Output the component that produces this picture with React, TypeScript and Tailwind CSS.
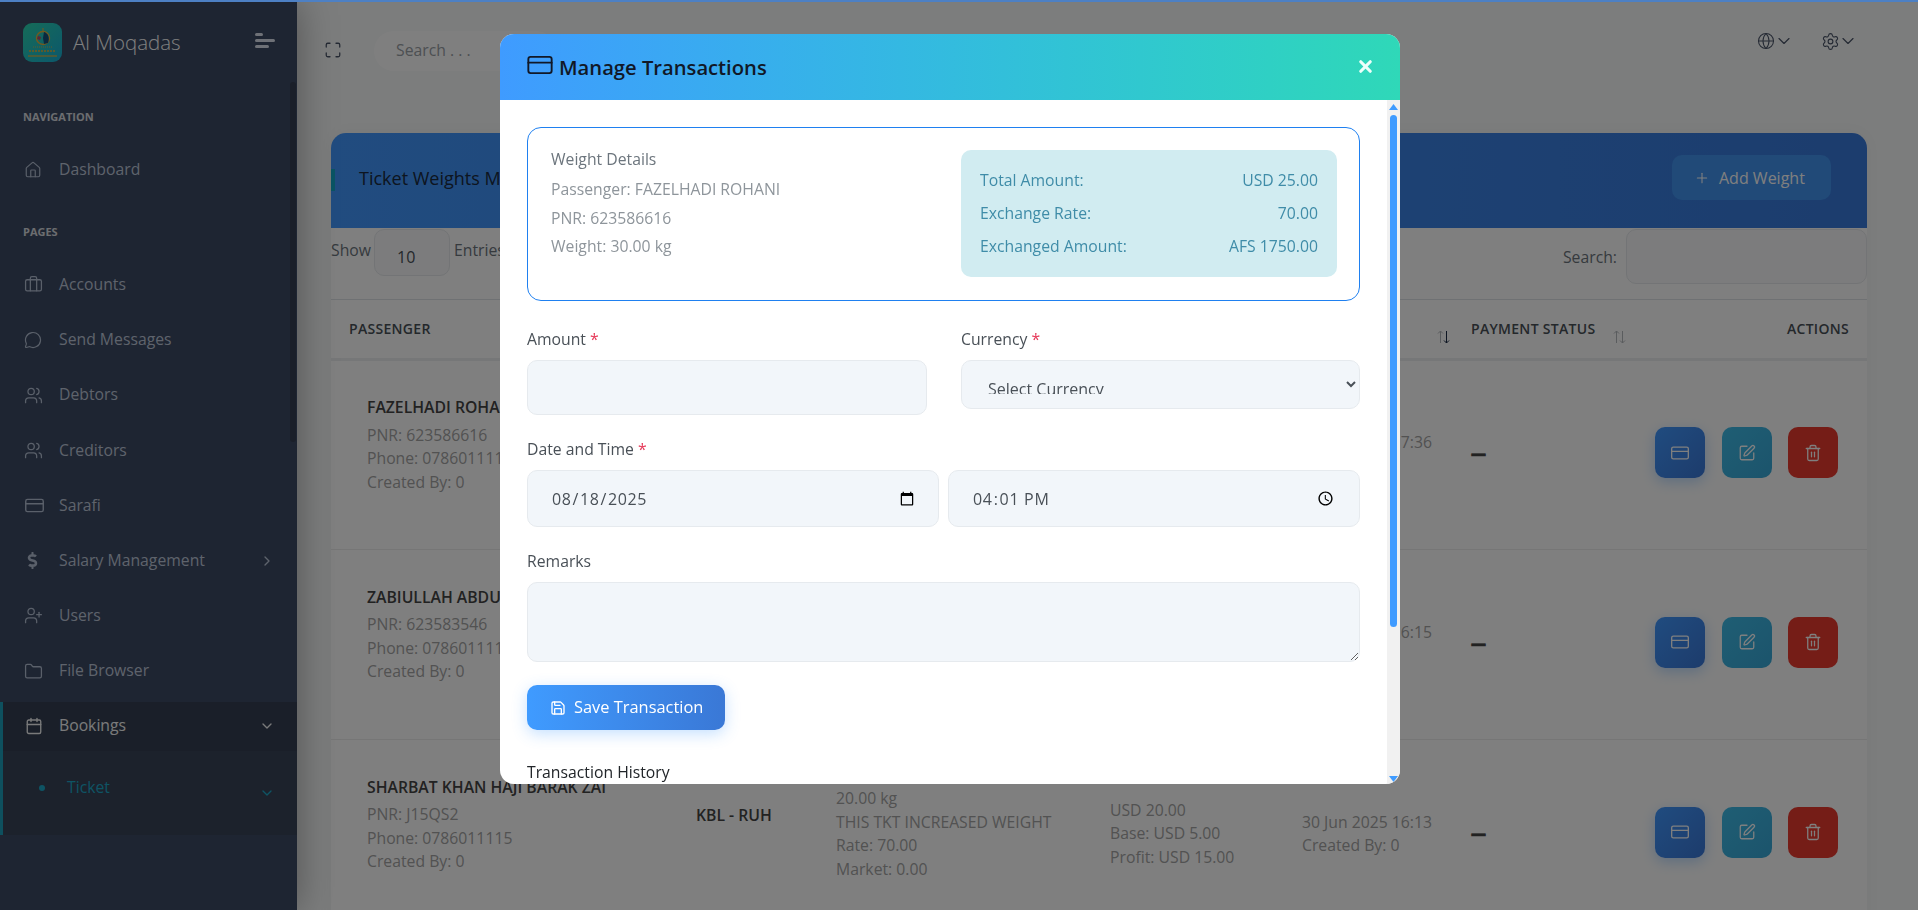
import React from 'react';
import {
  Briefcase,
  Calendar,
  ChevronDown,
  ChevronRight,
  CreditCard,
  Folder,
  Globe,
  House,
  Maximize,
  MessageCircle,
  Plus,
  Save,
  Settings,
  SquarePen,
  Trash2,
  UserPlus,
  Users,
  X,
} from 'lucide-react';
import { FaDollarSign } from 'react-icons/fa';

const rows = [
  {
    name: 'FAZELHADI ROHANI',
    pnr: '623586616',
    route: 'KBL - RUH',
    weight: '30.00 kg',
    note: 'THIS TKT INCREASED WEIGHT',
    amount: 'USD 25.00',
    base: 'USD 5.00',
    profit: 'USD 20.00',
    date: '30 Jun 2025 17:36',
  },
  {
    name: 'ZABIULLAH ABDUL',
    pnr: '623583546',
    route: 'KBL - RUH',
    weight: '20.00 kg',
    note: 'THIS TKT INCREASED WEIGHT',
    amount: 'USD 20.00',
    base: 'USD 5.00',
    profit: 'USD 15.00',
    date: '30 Jun 2025 16:15',
  },
  {
    name: 'SHARBAT KHAN HAJI BARAK ZAI',
    pnr: 'J15QS2',
    route: 'KBL - RUH',
    weight: '20.00 kg',
    note: 'THIS TKT INCREASED WEIGHT',
    amount: 'USD 20.00',
    base: 'USD 5.00',
    profit: 'USD 15.00',
    date: '30 Jun 2025 16:13',
  },
];

const NavItem: React.FC<{ icon: React.ReactNode; label: string; arrow?: boolean }> = ({ icon, label, arrow }) => (
  <div className="flex h-[55.2px] items-center pl-[24px] pr-[22px] pt-[2px] text-[#bcc6d8]">
    <span className="flex w-[35px] shrink-0 items-center text-[#b4c0d4]">{icon}</span>
    <span className="flex-1 text-[15.75px]">{label}</span>
    {arrow && <ChevronRight size={16} />}
  </div>
);

const NavLabel: React.FC<{ label: string }> = ({ label }) => (
  <div className="flex h-[60px] items-center pl-[23px] pt-[13px] text-[11px] font-bold text-[#ffffff] opacity-80">{label}</div>
);

const Logo = () => (
  <svg width="39" height="39" viewBox="0 0 39 39" className="shrink-0">
    <defs>
      <linearGradient id="logo-bg" x1="0" y1="0" x2="1" y2="1">
        <stop offset="0" stopColor="#2cd8b0" />
        <stop offset="1" stopColor="#18b0d8" />
      </linearGradient>
    </defs>
    <rect width="39" height="39" rx="9" fill="url(#logo-bg)" />
    <circle cx="20" cy="15" r="6.5" fill="none" stroke="#e8b23a" strokeWidth="1.4" />
    <path d="M21 9c4 1 6 6 4 11l-4 1-1-6z" fill="#14527e" />
    <path d="M15 13l3 1-1 3-3-1z" fill="#c04a6a" />
    <path d="M20 8V5" stroke="#e8b23a" strokeWidth="1" />
    <path d="M6 28h27" stroke="#e8b23a" strokeWidth="1.6" strokeDasharray="2 1" />
    <path d="M5 33h29" stroke="#e8b23a" strokeWidth="1.2" />
    <path d="M10 24h19" stroke="#e8b23a" strokeWidth=".8" strokeDasharray="1 1" />
  </svg>
);

const Sidebar = () => (
  <aside className="relative z-10 flex w-[297px] shrink-0 flex-col bg-[#3c4a64] shadow-[0_0_36px_rgba(0,0,0,0.35)]">
    <div className="flex h-[79px] items-center pl-[23px] pr-[22px] pt-[1px]">
      <Logo />
      <span className="ml-[11px] flex-1 text-[20.5px] font-light text-[#ffffff]">Al Moqadas</span>
      <div className="mt-[-4px] flex w-[20px] flex-col gap-[3px]">
        <div className="h-[3px] w-[8px] rounded-full bg-[#dde3ee]" />
        <div className="h-[3px] w-[20px] rounded-full bg-[#dde3ee]" />
        <div className="h-[3px] w-[14px] rounded-full bg-[#dde3ee]" />
      </div>
    </div>
    <div className="absolute right-[1px] top-[80px] h-[360px] w-[6px] rounded-full bg-[#343f52]" />
    <NavLabel label="NAVIGATION" />
    <NavItem icon={<House size={18} strokeWidth={1.6} />} label="Dashboard" />
    <NavLabel label="PAGES" />
    <NavItem icon={<Briefcase size={19} strokeWidth={1.6} />} label="Accounts" />
    <NavItem icon={<MessageCircle size={18} strokeWidth={1.6} />} label="Send Messages" />
    <NavItem icon={<Users size={19} strokeWidth={1.6} />} label="Debtors" />
    <NavItem icon={<Users size={19} strokeWidth={1.6} />} label="Creditors" />
    <NavItem icon={<CreditCard size={21} strokeWidth={1.6} />} label="Sarafi" />
    <NavItem icon={<FaDollarSign size={17} />} label="Salary Management" arrow />
    <NavItem icon={<UserPlus size={19} strokeWidth={1.6} />} label="Users" />
    <NavItem icon={<Folder size={19} strokeWidth={1.6} />} label="File Browser" />
    <div className="mt-[4px] border-l-[3px] border-[#1ca0bc] bg-[#384458]">
      <div className="flex h-[49px] items-center bg-[#343f52] pl-[22px] pr-[22px] text-[#ffffff] opacity-95">
        <span className="flex w-[34px] shrink-0 items-center">
          <Calendar size={18} strokeWidth={1.8} />
        </span>
        <span className="flex-1 text-[15.75px]">Bookings</span>
        <ChevronDown size={16} strokeWidth={2} />
      </div>
      <div className="flex h-[84px] pl-[36px] pr-[22px] pt-[25px] text-[#1ca8c8]">
        <span className="mt-[9px] h-[6px] w-[6px] rounded-full bg-[#1ca8c8]" />
        <span className="ml-[22px] flex-1 text-[15.75px]">Ticket</span>
        <ChevronDown size={16} strokeWidth={2} className="mt-[9px]" />
      </div>
    </div>
  </aside>
);

const Topbar = () => (
  <header className="flex h-[77px] items-center pl-[27px] pr-[60px] pt-[20px] text-[#4a5468]">
    <Maximize size={18} strokeWidth={1.7} className="mt-[-1px]" />
    <div className="ml-[32px] flex h-[40px] w-[182px] items-center rounded-full bg-[#ffffff] pl-[22px] text-[15.75px] text-[#9aa0a6]">Search . . .</div>
    <div className="mb-[19px] ml-auto flex items-center gap-[27px]">
      <div className="flex items-center">
        <Globe size={18} strokeWidth={1.4} />
        <ChevronDown size={20} strokeWidth={1.4} className="ml-[-1px]" />
      </div>
      <div className="flex items-center">
        <Settings size={19} strokeWidth={1.4} />
        <ChevronDown size={20} strokeWidth={1.4} className="ml-[-2px]" />
      </div>
    </div>
  </header>
);

const SortArrows: React.FC<{ active?: boolean; className: string }> = ({ active, className }) => (
  <svg width="13" height="14" viewBox="0 0 13 14" className={className} fill="none" strokeWidth="1">
    <path d="M3.5 13V1M1 3.5 3.5 1 6 3.5" stroke="#b4b8bc" />
    <path d="M9.5 1v12M7 10.5 9.5 13 12 10.5" stroke={active ? '#1a2a44' : '#b4b8bc'} />
  </svg>
);

const ActionButtons = () => (
  <div className="flex justify-end gap-[16.5px]">
    <button className="flex h-[51px] w-[50px] items-center justify-center rounded-[10px] bg-gradient-to-br from-[#4098ff] to-[#3a78d8] text-[#ffffff] shadow-[0_4px_14px_rgba(64,152,255,0.35)]">
      <CreditCard size={20} strokeWidth={1.6} />
    </button>
    <button className="flex h-[51px] w-[50px] items-center justify-center rounded-[10px] bg-gradient-to-br from-[#3ebce8] to-[#38a8d8] text-[#ffffff]">
      <SquarePen size={18} strokeWidth={1.7} />
    </button>
    <button className="flex h-[51px] w-[50px] items-center justify-center rounded-[10px] bg-[#ea3a2e] text-[#ffffff]">
      <Trash2 size={18} strokeWidth={1.7} />
    </button>
  </div>
);

const WeightsCard = () => (
  <section className="ml-[34px] mr-[51px] rounded-t-[15px] bg-[#ffffff] shadow-[0_0_16px_rgba(0,0,0,0.04)]">
    <div className="relative flex h-[95px] items-center justify-between rounded-t-[15px] bg-gradient-to-r from-[#4298ff] to-[#387adc] pl-[28px] pr-[36px]">
      <div className="absolute left-0 top-[36px] h-[22px] w-[4px] bg-[#14a8c8]" />
      <h1 className="mt-[-4px] text-[18px] font-medium text-[#1a2a40]">Ticket Weights Management</h1>
      <button className="mt-[-6px] flex h-[45px] w-[159px] items-center gap-[9px] rounded-[10px] bg-[#4294f0] pl-[22px] text-[16px] text-[#ffffff]">
        <Plus size={16} strokeWidth={1.6} />
        Add Weight
      </button>
    </div>
    <div className="flex h-[72px] items-start justify-between border-b border-[#dfe3e7] text-[15.75px] text-[#6c757d]">
      <div className="flex items-start">
        <span className="mt-[11px]">Show</span>
        <div className="ml-[3px] mt-[1px] flex h-[47px] w-[76px] items-center rounded-[10px] border border-[#e6e9ec] bg-[#f8f9fa] pl-[22px] pt-[8px] text-[16px] text-[#495057]">10</div>
        <span className="ml-[4px] mt-[11px]">Entries</span>
      </div>
      <div className="flex items-start">
        <span className="mr-[9px] mt-[18px]">Search:</span>
        <div className="mt-[1px] h-[55px] w-[241px] rounded-[10px] border border-[#e6e9ec] bg-[#f8f9fa]" />
      </div>
    </div>
    <table className="w-full table-fixed border-collapse">
      <thead>
        <tr className="h-[59px] border-b-[3px] border-[#eceef0] text-left text-[14px] tracking-[0.3px] text-[#495057]">
          <th className="w-[347px] pl-[18px] font-semibold">PASSENGER</th>
          <th className="w-[140px] pl-[18px] font-semibold">ROUTE</th>
          <th className="w-[274px] pl-[18px] font-semibold">WEIGHT</th>
          <th className="w-[192px] pl-[18px] font-semibold">AMOUNT</th>
          <th className="relative w-[169px] pl-[18px] font-semibold">
            DATE
            <SortArrows active className="absolute right-[3px] top-[30px]" />
          </th>
          <th className="relative w-[177px] pl-[18px] font-semibold">
            PAYMENT STATUS
            <SortArrows className="absolute right-[4px] top-[30px]" />
          </th>
          <th className="pr-[18px] text-right font-semibold">ACTIONS</th>
        </tr>
      </thead>
      <tbody className="text-[15.75px] leading-[23.5px] text-[#a4a4a4]">
        {rows.map((r) => (
          <tr key={r.pnr} className="h-[190px] border-b border-[#ececec] align-middle">
            <td className="overflow-visible whitespace-nowrap pb-[19px] pl-[36px]">
              <div className="font-semibold text-[#444444]">{r.name}</div>
              <div className="mt-[4px]">PNR: {r.pnr}</div>
              <div>Phone: 0786011115</div>
              <div>Created By: 0</div>
            </td>
            <td className="pb-[36px] pl-[18px] font-semibold text-[#444444]">{r.route}</td>
            <td className="whitespace-nowrap pl-[18px]">
              <div>{r.weight}</div>
              <div>{r.note}</div>
              <div>Rate: 70.00</div>
              <div>Market: 0.00</div>
            </td>
            <td className="whitespace-nowrap pl-[18px]">
              <div>{r.amount}</div>
              <div>Base: {r.base}</div>
              <div>Profit: {r.profit}</div>
            </td>
            <td className="whitespace-nowrap pl-[18px]">
              <div>{r.date}</div>
              <div>Created By: 0</div>
            </td>
            <td className="pb-[1px] pl-[18px] text-[15px] font-extrabold text-[#444444] [-webkit-text-stroke:0.6px_#444444]">—</td>
            <td className="pb-[4px] pr-[29px]">
              <ActionButtons />
            </td>
          </tr>
        ))}
      </tbody>
    </table>
  </section>
);

const RequiredLabel: React.FC<{ label: string; required?: boolean }> = ({ label, required }) => (
  <label className="block text-[15.75px] leading-[24px] text-[#495057]">
    {label}
    {required && <span className="ml-[4px] text-[#e63757]">*</span>}
  </label>
);

const fieldClass = 'rounded-[10px] border border-[#e6eaee] bg-[#f2f6fa] text-[16px] text-[#495057] outline-none';

const SummaryRow: React.FC<{ label: string; value: string }> = ({ label, value }) => (
  <div className="flex h-[33px] items-center justify-between">
    <span>{label}</span>
    <span>{value}</span>
  </div>
);

// headless chrome hides real scrollbars, so the modal's one is drawn
const ModalScrollbar = () => (
  <div className="flex w-[13px] shrink-0 flex-col items-center bg-[#f1f1f1] pt-[4px]">
    <svg width="9" height="6" viewBox="0 0 9 6" className="shrink-0">
      <path d="M4.5 0 9 6H0z" fill="#3f9bff" />
    </svg>
    <div className="mt-[5px] h-[512px] w-[7px] shrink-0 rounded-full bg-[#3f9bff]" />
    <svg width="9" height="6" viewBox="0 0 9 6" className="mb-[2px] mt-auto shrink-0">
      <path d="M0 0h9L4.5 6z" fill="#3f9bff" />
    </svg>
  </div>
);

const TransactionModal = () => (
  <div className="fixed inset-0 z-40 flex items-start justify-center bg-black/50 pr-[18px] pt-[34px]">
    <div className="flex h-[750px] w-[900px] flex-col overflow-hidden rounded-[14px] bg-white">
      <div className="flex h-[66px] shrink-0 items-center justify-between bg-gradient-to-r from-[#3f9bff] to-[#2fd8b8] pl-[26px] pr-[25px]">
        <div className="flex items-center gap-[5px] text-[#111827]">
          <CreditCard size={28} strokeWidth={1.6} className="mt-[-4px]" />
          <h2 className="mt-[1px] text-[20.2px] font-semibold">Manage Transactions</h2>
        </div>
        <X size={19} strokeWidth={4} className="mt-[-2px] text-[#ecfffa]" />
      </div>
      <div className="flex min-h-0 flex-1">
        <div className="min-w-0 flex-1 overflow-hidden pl-[27px] pr-[27px] pt-[27px]">
          <div className="flex h-[174px] rounded-[14px] border border-[#1f80f0] pl-[23px] pr-[22px]">
            <div className="flex-1 pt-[16px] text-[15.75px] text-[#8e959b]">
              <div className="leading-[31px] text-[#6c757d]">Weight Details</div>
              <div className="leading-[28.5px]">Passenger: FAZELHADI ROHANI</div>
              <div className="leading-[28.5px]">PNR: 623586616</div>
              <div className="leading-[28.5px]">Weight: 30.00 kg</div>
            </div>
            <div className="mt-[22px] h-[127px] w-[376px] rounded-[10px] bg-[#d1ecf1] px-[19px] pt-[14px] text-[15.75px] text-[#3f8ca8]">
              <SummaryRow label="Total Amount:" value="USD 25.00" />
              <SummaryRow label="Exchange Rate:" value="70.00" />
              <SummaryRow label="Exchanged Amount:" value="AFS 1750.00" />
            </div>
          </div>
          <div className="mt-[26px] flex gap-[34px]">
            <div className="w-[400px]">
              <RequiredLabel label="Amount" required />
              <input className={`${fieldClass} mt-[9px] h-[55px] w-full`} />
            </div>
            <div className="flex-1">
              <RequiredLabel label="Currency" required />
              <select className={`${fieldClass} mt-[9px] h-[49px] w-full pb-[14px] pl-[22px] pr-[6px] pt-[16px]`}>
                <option>Select Currency</option>
              </select>
            </div>
          </div>
          <div className="mt-[22px]">
            <RequiredLabel label="Date and Time" required />
            <div className="mt-[9px] flex gap-[9px]">
              <input type="date" defaultValue="2025-08-18" className={`${fieldClass} h-[57px] w-[412px] pl-[23px] pr-[21px] tracking-[0.6px]`} />
              <input type="time" defaultValue="16:01" className={`${fieldClass} h-[57px] min-w-0 flex-1 pl-[23px] pr-[22px] tracking-[0.7px]`} />
            </div>
          </div>
          <div className="mt-[22px]">
            <RequiredLabel label="Remarks" />
            <textarea className={`${fieldClass} mt-[9px] block h-[80px] w-full`} />
          </div>
          <button className="mt-[23px] flex h-[45px] w-[198px] items-center gap-[8px] rounded-[10px] bg-gradient-to-r from-[#3f9bff] to-[#3a78d6] pl-[23px] text-[16.4px] font-medium text-white shadow-[0_4px_15px_rgba(64,152,255,0.3)]">
            <Save size={16} strokeWidth={2} />
            Save Transaction
          </button>
          <h3 className="mt-[30px] text-[15.75px] leading-[24px] text-[#212529]">Transaction History</h3>
        </div>
        <ModalScrollbar />
      </div>
    </div>
  </div>
);

export default function App() {
  return (
    <div className="h-screen overflow-hidden bg-[#f8fafa] font-['Open_Sans',sans-serif]">
      <div className="fixed left-0 right-0 top-0 z-50 h-[2px] bg-[#4d80c4]" />
      <div className="flex h-full pt-[2px]">
        <Sidebar />
        <main className="min-w-0 flex-1">
          <Topbar />
          <div className="pt-[54px]">
            <WeightsCard />
          </div>
        </main>
      </div>
      <TransactionModal />
    </div>
  );
}
